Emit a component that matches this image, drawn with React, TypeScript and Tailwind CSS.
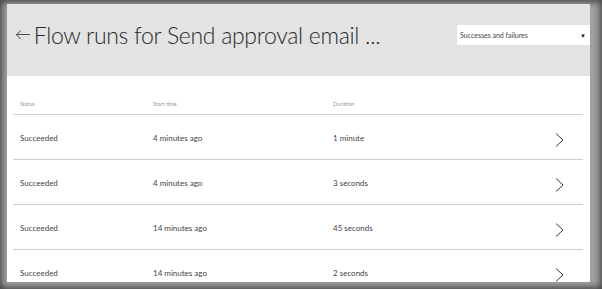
const runs = [
  { status: 'Succeeded', start: '4 minutes ago', duration: '1 minute' },
  { status: 'Succeeded', start: '4 minutes ago', duration: '3 seconds' },
  { status: 'Succeeded', start: '14 minutes ago', duration: '45 seconds' },
  { status: 'Succeeded', start: '14 minutes ago', duration: '2 seconds' },
];

function Chevron() {
  return (
    <svg width="9" height="14" viewBox="0 0 9 14" className="mt-[5px] ml-[2px]">
      <path d="M1 0.5 L8 7 L1 13.5" fill="none" stroke="#3a3a3a" strokeWidth="1" />
    </svg>
  );
}

export default function App() {
  return (
    <div className="w-[602px] h-[289px] overflow-hidden bg-[#a0a0a0] pl-[7px] pt-[4px] pr-[12px] pb-[7px] shadow-[inset_0_0_6px_2px_#444] font-['Lato',sans-serif]">
      <div className="w-full h-full bg-white overflow-hidden">
        <div className="h-[72px] bg-[#e3e3e3] flex items-start justify-between pl-[8px] pt-[15px]">
          <h1 className="flex items-center text-[23px] font-light text-[#2a2a2a] leading-[32px] tracking-[-0.3px]">
            <span className="text-[16px] mr-[3px] -mt-[3px]">&larr;</span>
            Flow runs for Send approval email ...
          </h1>
          <div className="mt-[6px] w-[133px] h-[20px] bg-white flex items-center justify-between pl-[3px] pr-[4px] text-[7px] text-[#444]">
            <span>Successes and failures</span>
            <span className="text-[6px] text-[#222]">&#9660;</span>
          </div>
        </div>
        <div className="pl-[6px] pr-[7px]">
          <div className="grid grid-cols-[133px_180px_1fr] items-center h-[39px] pt-[18px] pl-[7px] text-[5.5px] text-[#999] border-b border-[#cfcfcf]">
            <span>Status</span>
            <span>Start time</span>
            <span>Duration</span>
          </div>
          {runs.map((r, i) => (
            <div
              key={i}
              className="grid grid-cols-[133px_180px_1fr_30px] items-center h-[45px] pl-[7px] pt-[1px] text-[8px] text-[#444] border-b border-[#cfcfcf]"
            >
              <span>{r.status}</span>
              <span>{r.start}</span>
              <span>{r.duration}</span>
              <Chevron />
            </div>
          ))}
        </div>
      </div>
    </div>
  );
}
